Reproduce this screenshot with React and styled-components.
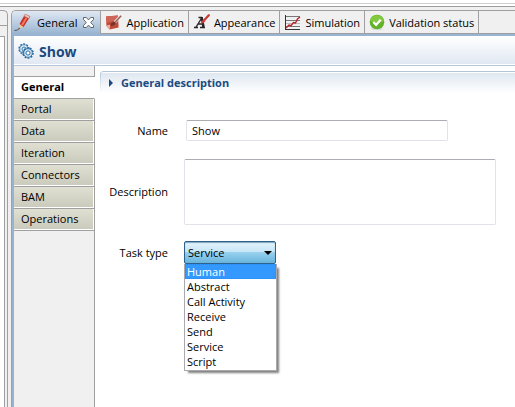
import React, { useState } from "react";
import styled, { createGlobalStyle } from "styled-components";

const GlobalStyle = createGlobalStyle`
  * { box-sizing: border-box; }
  body {
    margin: 0;
    background: #fff;
    color: #000;
    font: 11px/15px "Open Sans", "Noto Sans", sans-serif;
  }
  button, input, textarea, select { font: inherit; color: inherit; }
`;

const Window = styled.div`
  display: flex;
  flex-direction: column;
  min-height: 100vh;
`;

const TopEdge = styled.div`
  height: 7px;
  flex: none;
  border-bottom: 1px solid #9b9b9b;
  background: linear-gradient(#fff 3px, #cfcfcf 3px, #cfcfcf 4px, #fff 4px);
`;

const Workbench = styled.div`
  display: flex;
  flex: 1;
  padding-top: 3px;
  gap: 3px;
  background: #f0f0f0;
`;

const SidePane = styled.div`
  flex: none;
  display: flex;
  flex-direction: column;
  width: 8px;
  padding-right: 2px;
  border: solid #a0a0a0;
  border-width: 1px 1px 0 0;
  border-top-right-radius: 5px;
`;

const SideToolbar = styled.div`
  height: 15px;
  margin-right: -2px;
  border-bottom: 1px solid #a0a0a0;
`;

const SideContent = styled.div`
  flex: 1;
  margin-top: 10px;
  border: solid #a0a0a0;
  border-width: 1px 1px 0 0;
  background: #fff;
`;

const EditorPane = styled.div`
  flex: 1;
  min-width: 0;
  display: flex;
  flex-direction: column;
  border: solid #a0a0a0;
  border-width: 1px 0 0 1px;
  border-top-left-radius: 5px;
  overflow: hidden;
`;

const TabBar = styled.div`
  display: flex;
  flex: none;
  height: 23px;
`;

const Tab = styled.button`
  display: flex;
  align-items: center;
  gap: 4px;
  flex: none;
  height: 23px;
  padding: 0 4px;
  white-space: nowrap;
  border: solid #a0a0a0;
  border-width: 0 1px 1px 0;
  background: #f0f0f0;
  svg { flex: none; }
  ${(p) =>
    p.$active &&
    `
    gap: 6px;
    padding: 0 6px 0 2px;
    border-bottom: 0;
    background: linear-gradient(#dfe8f2, #99b4d1);
  `}
`;

const TabFill = styled.div`
  flex: 1;
  border-bottom: 1px solid #a0a0a0;
`;

const Frame = styled.div`
  flex: 1;
  display: flex;
  flex-direction: column;
  border: solid #99b4d1;
  border-width: 2px 0 0 2px;
  background: #fff;
`;

const Header = styled.header`
  display: flex;
  align-items: center;
  gap: 5px;
  flex: none;
  height: 30px;
  padding-left: 4px;
  border-bottom: 1px solid #b5c7da;
  background: linear-gradient(#fff, #e1e8f2 28px, #fff 28px);
`;

const Title = styled.h1`
  margin: 0;
  padding-top: 2px;
  font-size: 14px;
  line-height: 20px;
  color: #1a4a80;
`;

const Columns = styled.div`
  display: flex;
  flex: 1;
`;

const SideTabs = styled.nav`
  flex: none;
  display: flex;
  flex-direction: column;
  width: 81px;
  background: #f0f0f0;
`;

const TabsCap = styled.div`
  height: 11px;
  border: solid #a0a0a0;
  border-width: 0 1px 1px 0;
`;

const TabsRest = styled.div`
  flex: 1;
  border-right: 1px solid #a0a0a0;
`;

const SideTab = styled.button`
  height: 22px;
  padding: 0 7px 3px;
  text-align: left;
  border: solid #a0a0a0;
  border-width: 0 1px 1px 0;
  background: linear-gradient(#dfe0d2, #c9cabb);
  box-shadow: inset -1px -1px #fff;
  ${(p) =>
    p.$active &&
    `
    border-right-color: #fff;
    background: #fff;
    font-weight: 700;
  `}
`;

const Content = styled.main`
  flex: 1;
  min-width: 0;
  padding: 5px 0 0 5px;
`;

const SectionHeader = styled.h2`
  display: flex;
  align-items: center;
  gap: 8px;
  height: 22px;
  margin: 0;
  padding-left: 9px;
  font-size: 11px;
  line-height: 15px;
  color: #1a4a80;
  border-top: 1px solid #b5c3d6;
  border-top-left-radius: 4px;
  background:
    linear-gradient(#b5c3d6, #fff) left / 1px 100% no-repeat,
    linear-gradient(#fff 1px, #dfe7f0 1px, #fff);
`;

const Form = styled.form`
  display: grid;
  grid-template-columns: 68px minmax(0, 312px);
  column-gap: 16px;
  row-gap: 16px;
  align-items: center;
  padding-top: 27px;
`;

const Label = styled.label`
  text-align: right;
`;

const fieldBorder = `
  border: 1px solid #e2e3ea;
  border-top-color: #abadb3;
  border-radius: 2px;
  background: #fff;
  outline: 0;
`;

const TextInput = styled.input`
  display: block;
  width: 84%;
  height: 21px;
  margin-left: 2px;
  padding: 0 5px;
  ${fieldBorder}
`;

const TextArea = styled.textarea`
  display: block;
  width: 100%;
  height: 66px;
  margin-top: 2px;
  padding: 3px 5px;
  resize: none;
  ${fieldBorder}
`;

const Combo = styled.div`
  position: relative;
  width: 92px;
`;

const ComboIcon = styled.svg`
  position: absolute;
  right: 4px;
  top: 10px;
  pointer-events: none;
`;

const Select = styled.select`
  display: block;
  appearance: none;
  width: 100%;
  height: 23px;
  padding: 0 18px 0 3px;
  border: 1px solid #2c628b;
  border-radius: 2px;
  outline: 0;
  background: linear-gradient(#e5f4fc, #c4e5f6 50%, #98d1ef 50%, #68b3db);
  box-shadow: inset 0 1px 1px #7da6c0;
`;

const Options = styled.ul`
  position: absolute;
  top: 100%;
  left: 0;
  width: 93px;
  margin: 0;
  padding: 0 1px 1px;
  list-style: none;
  background: #fff;
  border: 1px solid #a9a9ae;
  border-top: 0;
  box-shadow: 3px 3px 2px -1px rgba(0, 0, 0, 0.5);
`;

const Option = styled.li`
  height: 15px;
  padding-left: 1px;
  ${(p) =>
    p.$highlighted &&
    `
    margin: 0 -1px;
    padding-left: 2px;
    color: #fff;
    background: #3399ff;
    outline: 1px dotted #cc6600;
    outline-offset: -1px;
  `}
`;

const PencilIcon = () => (
  <svg width="17" height="18" viewBox="0 0 17 18" aria-hidden="true">
    <path d="M0.5 16.5Q3 17 6 14" fill="none" stroke="#555" />
    <path d="M4.5 15.5l1-5.5 4 2.2z" fill="#f0c795" />
    <path d="M5.5 10L10 2l5 2.5-5.5 8.5z" fill="#c83227" />
    <path d="M7.2 10.5L12 3l1.5.8-4.6 7.7z" fill="#f07d6c" />
    <path d="M10 2l1.2-1.8L16 2.6l-1 1.9z" fill="#efd2cc" stroke="#b84b3d" strokeWidth=".6" />
    <path d="M4.5 15.5l.4-2 1.2.8z" fill="#332" />
  </svg>
);

const CloseIcon = () => (
  <svg width="11" height="11" viewBox="0 0 11 11" aria-hidden="true">
    <path
      d="M.5.5h2.8l2.2 2.4L7.7.5h2.8v2L7.7 5.5l2.8 3v2H7.7L5.5 8.1l-2.2 2.4H.5v-2l2.8-3-2.8-3z"
      fill="#fff"
      stroke="#54585e"
      strokeWidth=".9"
    />
  </svg>
);

const ApplicationIcon = () => (
  <svg width="17" height="17" viewBox="0 0 17 17" aria-hidden="true">
    <path d="M1 2.5l12-1 .6 12-9 2L1.5 12z" fill="#c04a3a" />
    <path d="M1 2.5l12-1 .2 4L1.6 9z" fill="#cf6556" />
    <path d="M1.5 11.5l3.5-.7-.3 4.7z" fill="#efb2a5" />
    <path d="M15.8 2L9.5 8.5" stroke="#f0f0f0" strokeWidth="2.8" />
    <path d="M16.2 1.8L9.8 8.5" stroke="#9b5b51" strokeWidth="1.5" />
    <path d="M5.5 9.5Q7.5 9 8.7 7.3l2.2 2Q9.5 12 6 12z" fill="#75332b" />
  </svg>
);

const AppearanceIcon = () => (
  <svg width="17" height="16" viewBox="0 0 17 16" aria-hidden="true">
    <path
      d="M1 13.5h4M7 13.5h5M2.8 13.5L9.3 3M9 3l.8 10.5M5 10h4.5M5.5 3.5H9"
      fill="none"
      stroke="#262626"
      strokeWidth="1.4"
    />
    <path d="M8.7 3.2L10.7 13" stroke="#262626" strokeWidth="2.2" />
    <path d="M15.8 1.2L10.5 7" stroke="#c83a34" strokeWidth="2.2" strokeLinecap="round" />
    <path d="M7.5 10Q8.5 6.5 11 5.5l1.5 1.5Q11 9.5 7.5 10z" fill="#d3403b" />
  </svg>
);

const SimulationIcon = () => (
  <svg width="17" height="17" viewBox="0 0 17 17" aria-hidden="true">
    <path d="M1 2.5h15M1 6.5h15M1 12.5h15" stroke="#777" />
    <path d="M1 9.5h15" stroke="#bbb" />
    <path d="M1.5 1v15M1 15.5h15" stroke="#333" />
    <path d="M2 14l3-3 2 .7 2.5-3.2 2 .5 2-4 2.5-2" fill="none" stroke="#b8262b" strokeWidth="1.4" />
  </svg>
);

const ValidIcon = () => (
  <svg width="16" height="17" viewBox="0 0 16 17" aria-hidden="true">
    <ellipse cx="8" cy="15" rx="6" ry="1.3" fill="#ddd" />
    <circle cx="8" cy="8" r="7.3" fill="#62b32a" />
    <path d="M1.2 7a6.9 6.9 0 0 1 13.6 0Q8 10 1.2 7z" fill="#83c83f" />
    <path d="M4.3 8l2.8 2.8 4.6-5" fill="none" stroke="#fff" strokeWidth="2.2" />
  </svg>
);

const GearsIcon = () => (
  <svg width="16" height="16" viewBox="0 0 16 16" fill="none" aria-hidden="true">
    <circle cx="6" cy="6" r="4.9" stroke="#3574a8" strokeWidth="1.6" strokeDasharray="1.9 1.2" />
    <circle cx="6" cy="6" r="4.2" fill="#e8f2f9" stroke="#3574a8" strokeWidth=".8" />
    <circle cx="6" cy="6" r="2" stroke="#3574a8" />
    <circle cx="10" cy="10" r="5" stroke="#286ba3" strokeWidth="1.6" strokeDasharray="1.9 1.2" />
    <circle cx="10" cy="10" r="4.3" fill="#d9eaf5" stroke="#286ba3" strokeWidth=".9" />
    <circle cx="10" cy="10" r="2.1" fill="#fff" stroke="#286ba3" />
  </svg>
);

const Twistie = () => (
  <svg width="4" height="8" viewBox="0 0 4 8" aria-hidden="true">
    <path d="M0 0l4 4-4 4z" fill="#1a4a80" />
  </svg>
);

const TABS = [
  { name: "General", Icon: PencilIcon },
  { name: "Application", Icon: ApplicationIcon },
  { name: "Appearance", Icon: AppearanceIcon },
  { name: "Simulation", Icon: SimulationIcon },
  { name: "Validation status", Icon: ValidIcon },
];
const PAGES = ["General", "Portal", "Data", "Iteration", "Connectors", "BAM", "Operations"];
const TYPES = ["Human", "Abstract", "Call Activity", "Receive", "Send", "Service", "Script"];

export default function App() {
  const [page, setPage] = useState("General");
  const [type, setType] = useState("Service");

  return (
    <Window>
      <GlobalStyle />
      <TopEdge />
      <Workbench>
        <SidePane>
          <SideToolbar />
          <SideContent />
        </SidePane>
        <EditorPane>
          <TabBar role="tablist">
            {TABS.map(({ name, Icon }, i) => (
              <Tab key={name} type="button" role="tab" aria-selected={i === 0} $active={i === 0}>
                <Icon />
                {name}
                {i === 0 && <CloseIcon />}
              </Tab>
            ))}
            <TabFill />
          </TabBar>
          <Frame>
            <Header>
              <GearsIcon />
              <Title>Show</Title>
            </Header>
            <Columns>
              <SideTabs>
                <TabsCap />
                {PAGES.map((name) => (
                  <SideTab key={name} type="button" $active={name === page} onClick={() => setPage(name)}>
                    {name}
                  </SideTab>
                ))}
                <TabsRest />
              </SideTabs>
              <Content>
                <SectionHeader>
                  <Twistie />
                  General description
                </SectionHeader>
                <Form>
                  <Label htmlFor="name">Name</Label>
                  <TextInput id="name" defaultValue="Show" />
                  <Label htmlFor="description">Description</Label>
                  <TextArea id="description" />
                  <Label htmlFor="type">Task type</Label>
                  <Combo>
                    <Select id="type" value={type} onChange={(e) => setType(e.target.value)}>
                      {TYPES.map((t) => (
                        <option key={t}>{t}</option>
                      ))}
                    </Select>
                    <ComboIcon width="8" height="4" viewBox="0 0 8 4" aria-hidden="true">
                      <path d="M0 0h8L4 4z" fill="#000" />
                    </ComboIcon>
                    <Options role="listbox" aria-label="Task type">
                      {TYPES.map((t, i) => (
                        <Option
                          key={t}
                          role="option"
                          aria-selected={i === 0}
                          $highlighted={i === 0}
                          onClick={() => setType(t)}
                        >
                          {t}
                        </Option>
                      ))}
                    </Options>
                  </Combo>
                </Form>
              </Content>
            </Columns>
          </Frame>
        </EditorPane>
      </Workbench>
    </Window>
  );
}
